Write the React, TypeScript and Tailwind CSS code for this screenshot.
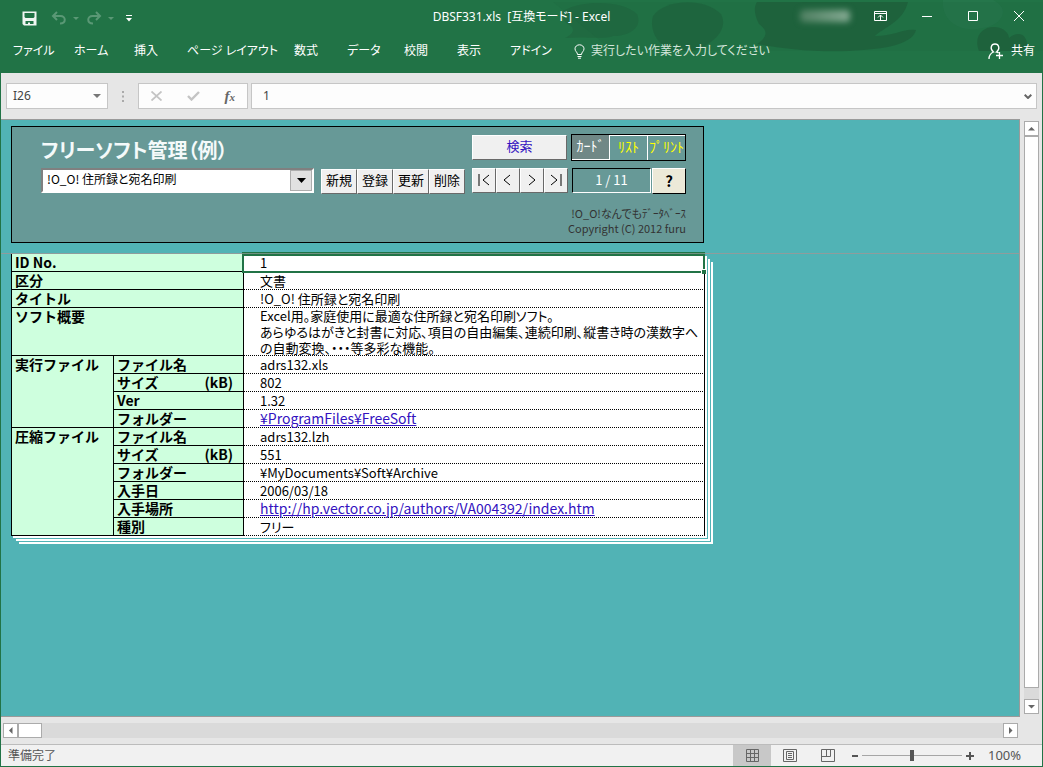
import { useState } from 'react'
import type { ReactNode } from 'react'

const TABS = [
  { label: 'ファイル', width: 'w-[61px]' },
  { label: 'ホーム', width: 'w-[60px]' },
  { label: '挿入', width: 'w-[53px]' },
  { label: 'ページ レイアウト', width: 'w-[107px]' },
  { label: '数式', width: 'w-[53px]' },
  { label: 'データ', width: 'w-[57px]' },
  { label: '校閲', width: 'w-[53px]' },
  { label: '表示', width: 'w-[53px]' },
  { label: 'アドイン', width: 'w-[64px]' },
]

const SOFTWARE = ['!O_O! 住所録と宛名印刷']

const NAV = [
  { label: '最初', d: 'M2 1V13M12 2L6 7L12 12' },
  { label: '前へ', d: 'M9 2L3 7L9 12' },
  { label: '次へ', d: 'M4 2L10 7L4 12' },
  { label: '最後', d: 'M2 2L8 7L2 12M12 1V13' },
]

type Field = { label: string; unit?: string; value: string; href?: string }

const EXE_FIELDS: Field[] = [
  { label: 'ファイル名', value: 'adrs132.xls' },
  { label: 'サイズ', unit: '(kB)', value: '802' },
  { label: 'Ver', value: '1.32' },
  { label: 'フォルダー', value: '¥ProgramFiles¥FreeSoft', href: '#folder' },
]

const ZIP_FIELDS: Field[] = [
  { label: 'ファイル名', value: 'adrs132.lzh' },
  { label: 'サイズ', unit: '(kB)', value: '551' },
  { label: 'フォルダー', value: '¥MyDocuments¥Soft¥Archive' },
  { label: '入手日', value: '2006/03/18' },
  { label: '入手場所', value: 'http://hp.vector.co.jp/authors/VA004392/index.htm', href: '#site' },
  { label: '種別', value: 'フリー' },
]

const LABEL_CELL = "h-[18px] border-b border-r border-black bg-[#ceffde] p-0 pl-[3px] text-left align-top text-sm leading-[17px] font-bold [font-feature-settings:normal]"
const VALUE_CELL = 'h-[18px] border-r border-b border-r-black border-b-black [border-bottom-style:dotted] bg-white p-0 pl-4 align-top leading-[17px]'
const RAISED = 'flex items-center justify-center border border-t-white border-l-white border-r-[#696969] border-b-[#696969] bg-[#f0f0f0]'

function TitleBar() {
  return (
    <div className="relative flex h-8 items-center justify-between">
      <div className="flex items-center pl-[22px] pt-1">
        <button aria-label="上書き保存">
          <svg width="15" height="15" viewBox="0 0 15 15" className="block">
            <path d="M0.500 0.500H14.500V14.500H2L0.500 13Z" fill="#f0f6f2" />
            <path d="M2.500 2H12.500V6L11.500 7H3.500L2.500 6Z M3.500 10H11.500V13H8V11.500H6V13H3.500Z" fill="#217346" />
          </svg>
        </button>
        <button aria-label="元に戻す" className="ml-[14px] flex items-center gap-1.5">
          <svg width="16" height="14" viewBox="0 0 16 14" fill="none" stroke="#5a9875" strokeWidth="2">
            <path d="M6 1L2 5L6 9M2 5H9.500C15 5 15.500 12.500 9 12.500" />
          </svg>
          <svg width="6" height="3" viewBox="0 0 6 3"><path d="M0 0H6L3 3Z" fill="#5a9875" /></svg>
        </button>
        <button aria-label="やり直し" className="ml-[7px] flex items-center gap-1.5">
          <svg width="16" height="14" viewBox="0 0 16 14" fill="none" stroke="#5a9875" strokeWidth="2">
            <path d="M10 1L14 5L10 9M14 5H6.500C1 5 0.500 12.500 7 12.500" />
          </svg>
          <svg width="6" height="3" viewBox="0 0 6 3"><path d="M0 0H6L3 3Z" fill="#5a9875" /></svg>
        </button>
        <button aria-label="クイック アクセス ツール バー" className="ml-3">
          <svg width="6" height="7" viewBox="0 0 6 7" className="block"><path d="M0 0H6V1H0ZM0 3H6L3 6.500Z" fill="#fff" /></svg>
        </button>
      </div>

      <h1 className="absolute inset-x-0 top-[9px] text-center text-xs leading-4 whitespace-pre text-white">DBSF331.xls  [互換モード] - Excel</h1>

      <div className="relative flex items-center pr-[19px]">
        <div className="mr-6 h-3 w-[50px] rounded-sm bg-gradient-to-r from-[#4f8062] to-[#86ab94] blur-[3px]" />
        <button aria-label="リボンの表示オプション" className="mr-[35px]">
          <svg width="13" height="10" viewBox="0 0 13 10" fill="none" stroke="#fff" className="block">
            <path d="M0.500 0.500H12.500V9.500H0.500ZM0.500 2.500H12.500M6.500 9V4M4 6.500L6.500 4L9 6.500" />
          </svg>
        </button>
        <button aria-label="最小化" className="mr-9">
          <svg width="10" height="10" viewBox="0 0 10 10" stroke="#fff" className="block"><path d="M0 5.500H10" /></svg>
        </button>
        <button aria-label="最大化" className="mr-9">
          <svg width="10" height="10" viewBox="0 0 10 10" fill="none" stroke="#fff" className="block"><path d="M0.500 0.500H9.500V9.500H0.500Z" /></svg>
        </button>
        <button aria-label="閉じる">
          <svg width="10" height="10" viewBox="0 0 10 10" stroke="#fff" className="block"><path d="M0 0L10 10M10 0L0 10" /></svg>
        </button>
      </div>
    </div>
  )
}

function Ribbon() {
  return (
    <header className="relative h-[73px] bg-[#217346] text-white">
      {/* cloud artwork behind the window buttons */}
      <svg className="absolute top-0 right-0" width="490" height="53" viewBox="0 0 490 53">
        <g fill="#1f643d">
          <path d="M12 10C30 0 70 0 84 14C90 28 76 36 60 36C50 40 32 36 12 38C20 34 22 30 18 26C10 22 8 16 10 10Z" opacity="0.6" />
          <path d="M100 16C110 0 150 -4 168 14C176 30 160 44 140 51H118C104 44 96 30 100 16Z" opacity="0.8" />
          <path d="M204 2H355C350 22 330 28 322 36C342 36 350 28 363 30C360 42 340 48 310 50C270 54 226 48 204 44C216 36 214 30 206 24C202 16 200 8 204 2Z" />
          <path d="M426 51C420 36 430 26 442 27C452 28 456 34 456 38C466 30 476 34 474 51Z" />
        </g>
        <path d="M390 0H440C460 10 446 26 430 28C404 34 388 18 390 0Z" fill="#2a7a50" opacity="0.5" />
        <path d="M0 2H490V51H60Z" fill="#1a5a38" opacity="0.12" />
      </svg>
      <TitleBar />
      <nav className="relative flex h-[38px] items-center pl-[13px] text-xs whitespace-nowrap">
        {TABS.map((t) => <button key={t.label} className={`${t.width} text-left`}>{t.label}</button>)}
        <label className="flex flex-1 items-center gap-1.5 text-[#d5e6dc]">
          <svg width="11" height="15" viewBox="0 0 11 15" fill="none" stroke="#fff">
            <path d="M3.500 10.500C3.500 8 1 7.500 1 4.800C1 2.500 3 0.800 5.500 0.800C8 0.800 10 2.500 10 4.800C10 7.500 7.500 8 7.500 10.500ZM3.500 12.500H7.500M4 14.200H7" />
          </svg>
          <input aria-label="操作アシスト" className="w-60 placeholder:text-[#d5e6dc] placeholder:opacity-100" placeholder="実行したい作業を入力してください" />
        </label>
        <button className="flex items-center gap-[7px] pr-2">
          <svg width="16" height="17" viewBox="0 0 16 17" fill="none" stroke="#fff" strokeWidth="1.300">
            <path d="M1 16C1 12 3 10 5.500 9C1.500 6 3 1 7 1C11 1 12.500 6 8.500 9C9.500 9.200 10 9.500 10.500 10M8 12.500H15M11.500 9V16" />
          </svg>
          共有
        </button>
      </nav>
    </header>
  )
}

function FormulaBar() {
  return (
    <div className="flex h-[46px] items-center bg-[#e6e6e6] px-[5px] text-[#444]">
      <div className="flex h-[26px] w-[102px] items-center border border-[#c6c6c6] bg-[#fdfdfd] px-1.5">
        <input aria-label="名前ボックス" defaultValue="I26" className="w-full min-w-0 text-xs" />
        <svg width="8" height="4" viewBox="0 0 8 4" className="shrink-0"><path d="M0 0H8L4 4Z" fill="#777" /></svg>
      </div>
      <svg width="2" height="11" viewBox="0 0 2 11" className="mx-3.5"><path d="M0 0H2V2H0ZM0 4.500H2V6.500H0ZM0 9H2V11H0Z" fill="#aaa" /></svg>
      <div className="flex h-[26px] w-[110px] items-center justify-between border border-[#c6c6c6] bg-[#fdfdfd] px-3">
        <button aria-label="キャンセル">
          <svg width="11" height="10" viewBox="0 0 11 10" stroke="#c4c4c4" strokeWidth="1.800" className="block"><path d="M0.500 0.500L10.500 9.500M10.500 0.500L0.500 9.500" /></svg>
        </button>
        <button aria-label="入力">
          <svg width="13" height="10" viewBox="0 0 13 10" fill="none" stroke="#c4c4c4" strokeWidth="2.400" className="block"><path d="M1 5L4.500 8.500L12 1" /></svg>
        </button>
        <button aria-label="関数の挿入" className="font-['Liberation_Serif',serif] text-[15px] leading-4 font-bold italic text-[#666]">
          f<span className="text-[11px]">x</span>
        </button>
      </div>
      <div className="ml-[3px] flex h-[26px] flex-1 items-center border border-[#c6c6c6] bg-[#fdfdfd] pr-1 pl-[11px]">
        <input aria-label="数式バー" defaultValue="1" className="min-w-0 flex-1 text-xs" />
        <svg width="8" height="5" viewBox="0 0 8 5" fill="none" stroke="#666" strokeWidth="2"><path d="M0.700 0.700L4 4L7.300 0.700" /></svg>
      </div>
    </div>
  )
}

function ControlPanel() {
  const [view, setView] = useState('ｶｰﾄﾞ')

  return (
    <section className="mt-1.5 ml-2.5 h-[117px] w-[693px] border border-black bg-[#679997] pt-[7px] pr-[17px] pl-[29px]">
      <div className="flex h-[27px] items-stretch">
        <h2 className="flex-1 text-xl leading-[31px] font-bold text-[#f4fafa]">フリーソフト管理（例）</h2>
        <button className={`${RAISED} mr-1 my-px w-[95px] pb-1 text-[13px] text-[#3312c0]`}>検索</button>
        <div className="flex w-[115px] border border-black text-sm [font-feature-settings:normal]">
          {['ｶｰﾄﾞ', 'ﾘｽﾄ', 'ﾌﾟﾘﾝﾄ'].map((v) => (
            <button key={v} onClick={() => setView(v)}
              className={`flex-1 border-r border-white pb-1 whitespace-nowrap last:border-r-0 ${v === view ? 'border-b bg-[#708886] text-white' : 'border-t text-[#ffff00]'}`}>
              {v}
            </button>
          ))}
        </div>
      </div>

      <div className="mt-[7px] flex h-[26px]">
        <div className="relative h-[25px] w-[273px] border-2 border-t-[#808080] border-l-[#808080] border-r-white border-b-white bg-white">
          <select aria-label="ソフト名" className="block h-[21px] w-full appearance-none pb-1 pl-1 text-xs leading-4 text-black">
            {SOFTWARE.map((s) => <option key={s}>{s}</option>)}
          </select>
          <span className="pointer-events-none absolute inset-y-0 right-0 flex w-[22px] items-center justify-center border border-[#adadad] bg-[#e1e1e1]">
            <svg width="9" height="5" viewBox="0 0 9 5"><path d="M0 0H9L4.500 5Z" fill="#000" /></svg>
          </span>
        </div>
        <div className="mt-px ml-[7px] flex">
          {['新規', '登録', '更新', '削除'].map((a) => (
            <button key={a} className={`${RAISED} w-9 pb-1 text-[13px]`}>{a}</button>
          ))}
        </div>
        <div className="mr-1 ml-auto flex h-[25px]">
          {NAV.map((n) => (
            <button key={n.label} aria-label={n.label} className={`${RAISED} w-6 pb-0.5`}>
              <svg width="14" height="14" viewBox="0 0 14 14" fill="none" stroke="#000"><path d={n.d} /></svg>
            </button>
          ))}
        </div>
        <output className="h-[25px] w-[79px] border border-t-black border-l-black border-r-white border-b-white text-center text-[13px] leading-[22px] whitespace-pre text-white">1 / 11</output>
        <button aria-label="ヘルプ" className="ml-px h-[26px] w-[34px] border border-t-white border-l-white border-r-black border-b-black bg-[#ece9d8] text-[15px] leading-5 font-bold">?</button>
      </div>

      <p className="mt-3 text-right text-[11px] leading-[15px] text-[#333]">
        !O_O!なんでもﾃﾞｰﾀﾍﾞｰｽ<br />
        Copyright (C) 2012 furu
      </p>
    </section>
  )
}

function ValueCell({ href, children }: { href?: string; children: ReactNode }) {
  return (
    <td className={VALUE_CELL}>
      {href ? <a href={href} className="text-sm leading-[17px] text-[#3312c0] underline">{children}</a> : children}
    </td>
  )
}

function FieldGroup({ title, fields }: { title: string; fields: Field[] }) {
  return (
    <tbody>
      {fields.map((f, i) => (
        <tr key={f.label}>
          {i === 0 && <th rowSpan={fields.length} scope="rowgroup" className={LABEL_CELL}>{title}</th>}
          <th scope="row" className={LABEL_CELL}>
            <div className="flex justify-between pr-2.5">
              <span>{f.label}</span>
              {f.unit && <span>{f.unit}</span>}
            </div>
          </th>
          <ValueCell href={f.href}>{f.value}</ValueCell>
        </tr>
      ))}
    </tbody>
  )
}

function CardTable() {
  return (
    <table className="ml-2.5 w-[694px] table-fixed border-separate border-spacing-0 border-l border-black text-[13px] text-black shadow-[2px_2px_0_#fff,3px_3px_0_#51b3b5,5px_5px_0_#fff,6px_6px_0_#51b3b5,8px_8px_0_#fff]">
      <colgroup>
        <col className="w-[102px]" />
        <col className="w-[130px]" />
        <col />
      </colgroup>
      <tbody>
        <tr>
          <th colSpan={2} scope="row" className={LABEL_CELL}>ID No.</th>
          <td className={`relative ${VALUE_CELL}`}>
            1
            {/* active cell frame with its fill handle */}
            <span className="absolute -top-0.5 -right-px -bottom-0.5 -left-0.5 border-2 border-t-4 border-[#217346]" />
            <span className="absolute -top-px -right-px -left-0.5 h-px bg-[#6f9080]" />
            <span className="absolute -right-0.5 -bottom-[3px] size-[5px] border-t border-l border-white bg-[#217346]" />
          </td>
        </tr>
        <tr>
          <th colSpan={2} scope="row" className={LABEL_CELL}>区分</th>
          <ValueCell>文書</ValueCell>
        </tr>
        <tr>
          <th colSpan={2} scope="row" className={LABEL_CELL}>タイトル</th>
          <ValueCell>!O_O! 住所録と宛名印刷</ValueCell>
        </tr>
        <tr>
          <th colSpan={2} scope="row" className={LABEL_CELL}>ソフト概要</th>
          <td className={`${VALUE_CELL} whitespace-nowrap`}>
            <p className="h-[47px] leading-4">
              Excel用。家庭使用に最適な住所録と宛名印刷ソフト。<br />
              あらゆるはがきと封書に対応、項目の自由編集、連続印刷、縦書き時の漢数字へ<br />
              の自動変換、・・・等多彩な機能。
            </p>
          </td>
        </tr>
      </tbody>
      <FieldGroup title="実行ファイル" fields={EXE_FIELDS} />
      <FieldGroup title="圧縮ファイル" fields={ZIP_FIELDS} />
    </table>
  )
}

function ScrollButton({ label, d }: { label: string; d: string }) {
  return (
    <button aria-label={label} className="flex size-[15px] shrink-0 items-center justify-center border border-[#ababab] bg-white">
      <svg width="9" height="9" viewBox="0 0 9 9"><path d={d} fill="#666" /></svg>
    </button>
  )
}

function StatusBar() {
  return (
    <footer className="flex h-[22px] items-stretch border-t border-[#bcbcbc] bg-[#f1f1f1] pr-5 text-xs text-[#555]">
      <span className="flex-1 pl-[7px] leading-[22px]">準備完了</span>
      <button aria-label="標準" className="flex w-[38px] items-center justify-center bg-[#c8c8c8]">
        <svg width="13" height="13" viewBox="0 0 13 13" fill="none" stroke="#666"><path d="M0.500 0.500H12.500V12.500H0.500ZM4.500 0V13M8.500 0V13M0 4.500H13M0 8.500H13" /></svg>
      </button>
      <button aria-label="ページ レイアウト" className="flex w-[38px] items-center justify-center">
        <svg width="14" height="13" viewBox="0 0 14 13" fill="none" stroke="#666"><path d="M0.500 0.500H13.500V12.500H0.500ZM3.500 2.500H10.500V10.500H3.500ZM5 4.500H9M5 6.500H9M5 8.500H9" /></svg>
      </button>
      <button aria-label="改ページ プレビュー" className="flex w-[38px] items-center justify-center">
        <svg width="14" height="13" viewBox="0 0 14 13" fill="none" stroke="#666"><path d="M0.500 0.500H13.500V12.500H0.500ZM0.500 7.500H9.500V0.500M5.500 0.500V7.500" /></svg>
      </button>
      <button aria-label="縮小" className="mr-1 ml-[5px]">
        <svg width="6" height="2" viewBox="0 0 6 2" className="block"><path d="M0 0H6V2H0Z" fill="#555" /></svg>
      </button>
      <input type="range" aria-label="ズーム" min="0" max="200" defaultValue="100"
        className="h-full w-[100px] appearance-none bg-transparent bg-[linear-gradient(#a6a6a6,#a6a6a6)] bg-[length:100%_1px] bg-center bg-no-repeat [&::-webkit-slider-thumb]:h-[11px] [&::-webkit-slider-thumb]:w-1 [&::-webkit-slider-thumb]:appearance-none [&::-webkit-slider-thumb]:bg-[#555]" />
      <button aria-label="拡大" className="mr-[14px] ml-1">
        <svg width="8" height="8" viewBox="0 0 8 8" className="block"><path d="M3 0H5V3H8V5H5V8H3V5H0V3H3Z" fill="#555" /></svg>
      </button>
      <span className="w-[34px] text-[13px] leading-[21px]">100%</span>
    </footer>
  )
}

export default function App() {
  return (
    <div className="flex min-h-screen flex-col border-b border-[#217346] bg-[#e6e6e6] font-['Noto_Sans','Noto_Sans_CJK_JP',sans-serif] [font-feature-settings:'palt']">
      <Ribbon />
      <div className="flex flex-1 flex-col border-x border-[#217346]">
        <FormulaBar />
        <div className="flex flex-1">
          <main className="min-w-0 flex-1 border-t border-r border-b border-[#9a9a9a] bg-[#51b3b5] font-['Noto_Sans_CJK_JP',sans-serif]">
            <ControlPanel />
            <div className="mt-2.5 border-t border-[#8f9c9c]">
              <CardTable />
            </div>
          </main>
          <div className="flex w-[22px] flex-col items-center pt-0.5 pb-[3px]">
            <ScrollButton label="上へスクロール" d="M1 6.500H8L4.500 3Z" />
            <div className="w-[15px] flex-1 bg-[#dadada] pb-[11px]">
              <div className="h-full border border-[#ababab] bg-white" />
            </div>
            <ScrollButton label="下へスクロール" d="M1 3H8L4.500 6.500Z" />
          </div>
        </div>
        <div className="flex h-[27px] items-center pr-6 pl-0.5">
          <ScrollButton label="左へスクロール" d="M6.500 1V8L3 4.500Z" />
          <div className="h-[15px] flex-1 bg-[#dadada]">
            <div className="h-full w-6 border border-[#ababab] bg-white" />
          </div>
          <ScrollButton label="右へスクロール" d="M3 1V8L6.500 4.500Z" />
        </div>
        <StatusBar />
      </div>
    </div>
  )
}
